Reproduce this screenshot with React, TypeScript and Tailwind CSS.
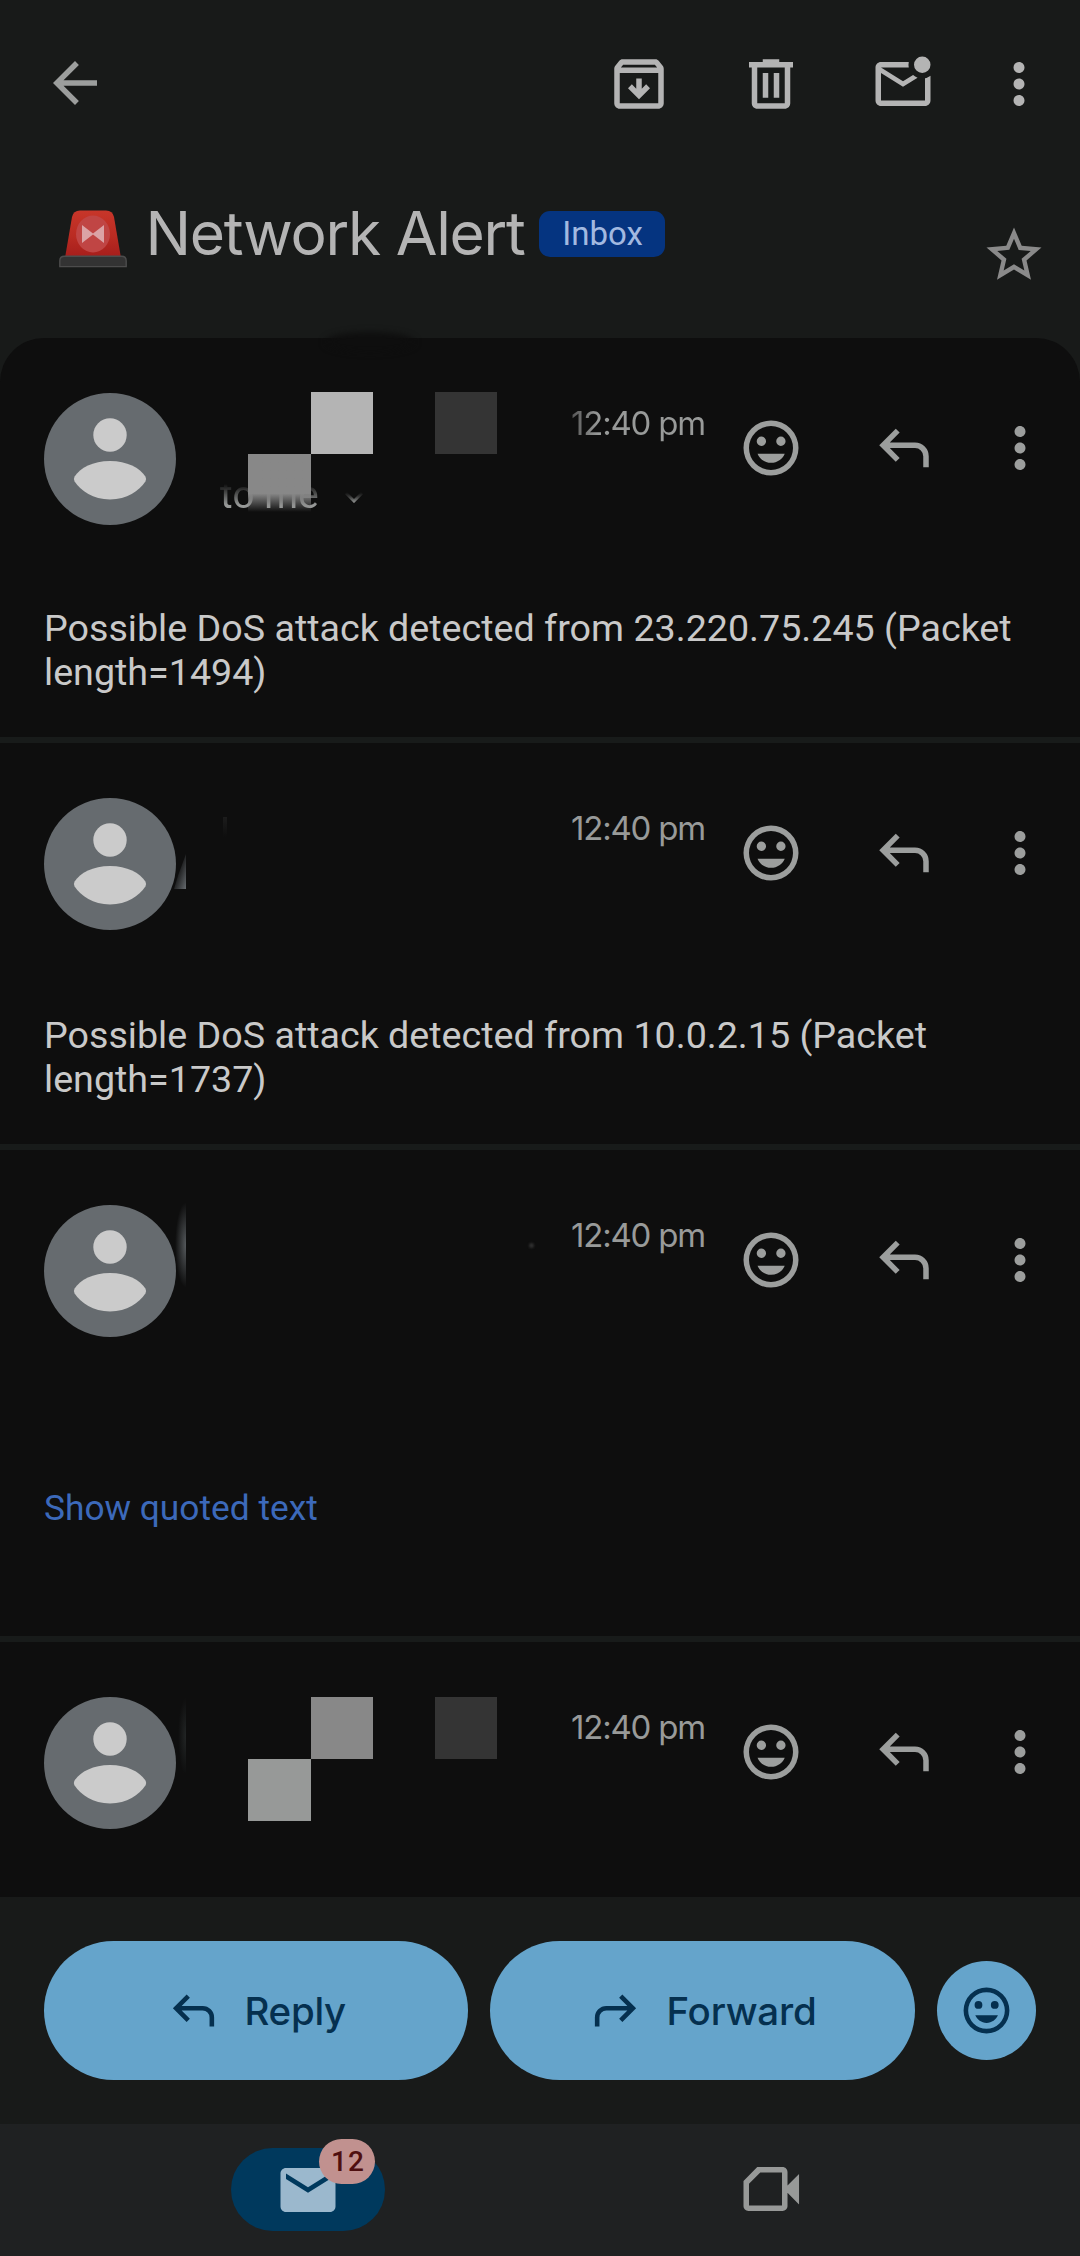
import type { ReactNode } from "react";

type IconProps = { d: string; className: string };

function Icon({ d, className }: IconProps) {
  return (
    <svg viewBox="0 0 24 24" fill="currentColor" className={`block shrink-0 ${className}`}>
      <path fillRule="evenodd" d={d} />
    </svg>
  );
}

const BACK = "M20 11H7.83l5.59-5.59L12 4l-8 8 8 8 1.41-1.41L7.83 13H20v-2z";
const ARCHIVE =
  "M20.54 5.23l-1.39-1.68C18.88 3.21 18.47 3 18 3H6c-.47 0-.88.21-1.16.55L3.46 5.23C3.17 5.57 3 6.02 3 6.5V19c0 1.1.9 2 2 2h14c1.1 0 2-.9 2-2V6.5c0-.48-.17-.93-.46-1.27zM6.24 5h11.52l.83 1H5.42l.82-1zM5 19V8h14v11H5zm11-5.5l-4 4-4-4 1.4-1.4 1.6 1.6V10h2v3.7l1.6-1.6z";
const TRASH =
  "M9 3v1H4v2h1v13c0 1.1.9 2 2 2h10c1.1 0 2-.9 2-2V6h1V4h-5V3H9zM7 6h10v13H7V6zM9 8v9h2V8H9zm4 0v9h2V8h-2z";
const UNREAD =
  "M22 8.98V18c0 1.1-.9 2-2 2H4c-1.1 0-2-.9-2-2V6c0-1.1.9-2 2-2h10.1a5 5 0 0 0 0 2H4l8 5 3.67-2.29c.47.43 1.02.76 1.63.98L12 13 4 8v10h16V9.9c.74-.15 1.42-.48 2-.92zM19 2a3 3 0 1 0 0 6 3 3 0 0 0 0-6z";
const MORE =
  "M12 8c1.1 0 2-.9 2-2s-.9-2-2-2-2 .9-2 2 .9 2 2 2zm0 2c-1.1 0-2 .9-2 2s.9 2 2 2 2-.9 2-2-.9-2-2-2zm0 6c-1.1 0-2 .9-2 2s.9 2 2 2 2-.9 2-2-.9-2-2-2z";
const STAR =
  "M22 9.24l-7.19-.62L12 2 9.19 8.63 2 9.24l5.46 4.73L5.82 21 12 17.27 18.18 21l-1.63-7.03L22 9.24zM12 15.4l-3.76 2.27 1-4.28-3.32-2.88 4.38-.38L12 6.1l1.71 4.04 4.38.38-3.32 2.88 1 4.28L12 15.4z";
const SMILE =
  "M12 2a10 10 0 1 0 0 20 10 10 0 0 0 0-20zm0 18a8 8 0 1 1 0-16 8 8 0 0 1 0 16zM8.5 7.850a1.700 1.700 0 1 0 0 3.400 1.700 1.700 0 0 0 0-3.400zm7.100 0a1.700 1.700 0 1 0 0 3.400 1.700 1.700 0 0 0 0-3.400zM7.100 14.100c.8 1.95 2.700 3.300 4.950 3.300s4.150-1.350 4.950-3.300H7.100z";
const REPLY =
  "M19 19v-4q0-1.25-.875-2.125T16 12H6.825l3.6 3.6L9 17l-6-6 6-6 1.425 1.4-3.6 3.6H16q2.075 0 3.538 1.463T21 15v4h-2z";
const FORWARD =
  "M5 19v-4q0-1.25.875-2.125T8 12h9.175l-3.6 3.6L15 17l6-6-6-6-1.425 1.4 3.6 3.6H8q-2.075 0-3.538 1.463T3 15v4h2z";
const MAIL =
  "M20 4H4c-1.1 0-2 .9-2 2v12c0 1.1.9 2 2 2h16c1.1 0 2-.9 2-2V6c0-1.1-.9-2-2-2zm0 4l-8 5-8-5V6l8 5 8-5v2z";
const MEET =
  "M7 4h9.2c1 0 1.8.8 1.8 1.8v4.9l4.2-4.2v11.1L18 13.4v4.8c0 1-.8 1.8-1.8 1.8H3.8c-1 0-1.8-.8-1.8-1.8V9.1L7 4zm1.1 2L4 10.1V18h12V6H8.100z";

function Siren() {
  return (
    <svg viewBox="0 0 68 58" className="block h-[58px] w-[68px] shrink-0">
      <defs>
        <linearGradient id="lamp" x1="0" y1="0" x2="0" y2="1">
          <stop offset="0" stopColor="#c8362a" />
          <stop offset="0.55" stopColor="#b92b22" />
          <stop offset="1" stopColor="#a51d1b" />
        </linearGradient>
      </defs>
      <path d="M6 48 13 7Q14.300 .4 21 .4H47Q53.700 .4 55 7L62 48Z" fill="url(#lamp)" />
      <ellipse cx="34" cy="24" rx="17" ry="18.500" fill="#c04544" />
      <path d="M23 15 34 23.500 45 15V33L34 24.500 23 33Z" fill="#dba3a6" />
      <path d="M.8 56.600V51Q.8 46.300 5.500 46.300H62.500Q67.200 46.300 67.200 51V56.600Z" fill="#333333" stroke="#4c4c4c" strokeWidth="1.400" />
    </svg>
  );
}

function Avatar() {
  return (
    <svg viewBox="0 0 132 132" className="block size-[132px] shrink-0">
      <circle cx="66" cy="66" r="66" fill="#666b6f" />
      <circle cx="66" cy="42" r="16.700" fill="#cbcbcb" />
      <path d="M66 68C83 68 96 75 101.400 83.500Q102.800 86 101.400 88.500C95 98 83 106.500 66 106.500S37 98 30.600 88.500Q29.200 86 30.600 83.500C36 75 49 68 66 68Z" fill="#cbcbcb" />
    </svg>
  );
}

function Message({
  className,
  overlay,
  fadedTime,
  children,
}: {
  className: string;
  overlay?: ReactNode;
  fadedTime?: boolean;
  children?: ReactNode;
}) {
  return (
    <article className={`shrink-0 pt-[55px] ${className}`}>
      <header className="relative flex h-[132px] items-start justify-between pl-[44px]">
        <Avatar />
        <div className="flex">
          <time
            className={`mt-[10px] w-[137px] whitespace-nowrap font-[Inter,sans-serif] text-[33px] leading-[40px] tracking-[-1.2px] ${
              fadedTime
                ? "bg-linear-to-r from-[#555] via-[#989a99] via-20% to-[#989a99] bg-clip-text text-transparent"
                : "text-[#989a99]"
            }`}
          >
            12:40 pm
          </time>
          <div className="mt-[22px] ml-[30px] flex pr-[27px] text-[#9c9e9d]">
            <Icon d={SMILE} className="size-[66px]" />
            <Icon d={REPLY} className="ml-[67px] size-[66px]" />
            <Icon d={MORE} className="ml-[50px] size-[66px]" />
          </div>
        </div>
        {overlay}
      </header>
      {children}
    </article>
  );
}

function Divider() {
  return <div className="h-[6px] shrink-0 bg-[#181b1a]" />;
}

const bodyText = "pl-[44px] pr-[44px] text-[37.65px] leading-[44px] text-[#c9c9c9]";

export default function App() {
  return (
    <div className="flex h-[2256px] w-[1080px] flex-col overflow-hidden bg-[#181a19] font-[Roboto,sans-serif]">
      <nav className="flex h-[168px] shrink-0 items-center pr-[28px] pl-[42px] text-[#b4b4b4]">
        <Icon d={BACK} className="mb-[3px] size-[66px] text-[#9c9e9d]" />
        <Icon d={ARCHIVE} className="ml-auto size-[66px]" />
        <Icon d={TRASH} className="ml-[66px] size-[66px]" />
        <Icon d={UNREAD} className="ml-[66px] size-[66px]" />
        <Icon d={MORE} className="ml-[50px] size-[66px]" />
      </nav>

      <div className="flex h-[170px] shrink-0 items-start pr-[33px] pl-[59px]">
        <div className="mt-[42px]">
          <Siren />
        </div>
        <h1 className="mt-[29px] ml-[18.500px] whitespace-nowrap font-[Inter,sans-serif] text-[60.500px] leading-[72px] font-normal tracking-[-1.25px] text-[#b4b4b4]">
          Network Alert
        </h1>
        <span className="mt-[43px] ml-[14px] flex h-[46px] w-[126px] items-center justify-center rounded-[11px] bg-[#053480] pl-[2px] text-[33px] leading-[46px] text-[#a2b9e0]">
          Inbox
        </span>
        <Icon d={STAR} className="mt-[54px] ml-auto size-[66px] text-[#8a8a8a]" />
      </div>

      <main className="relative flex h-[1559px] shrink-0 flex-col rounded-t-[44px] bg-[#0e0e0e]">
        <div className="absolute top-[-6px] left-[325px] h-[20px] w-[90px] rounded-[50%] bg-[#0e0e0e] blur-[3px]" />

        <Message
          className="h-[399px]"
          fadedTime
          overlay={
            <>
              <div className="absolute top-[78px] left-[220px] flex items-center gap-[25px] mask-linear-[to_bottom,transparent_13px,black_34px] text-[#979998]">
                <span className="whitespace-nowrap text-[38.500px] leading-[48px] tracking-[0.2px]">to me</span>
                <svg viewBox="0 0 20 12" className="mt-[4px] h-[12px] w-[20px]">
                  <defs>
                    <linearGradient id="chevron" x1="0" y1="0" x2="0" y2="1">
                      <stop offset="0" stopColor="#979998" stopOpacity="0.1" />
                      <stop offset="1" stopColor="#979998" />
                    </linearGradient>
                  </defs>
                  <path d="M2 2 10 10 18 2" fill="none" stroke="url(#chevron)" strokeWidth="3" />
                </svg>
              </div>
              <div className="absolute -top-px left-[248px] grid grid-cols-[63px_62px_62px_62px] grid-rows-[62px_58px]">
                <div className="col-start-2 bg-[#b4b4b4]" />
                <div className="col-start-4 bg-[#343434]" />
                <div className="col-start-1 row-start-2 bg-linear-to-b from-[#888888] from-68% to-transparent" />
              </div>
            </>
          }
        >
          <p className={`mt-[81px] ${bodyText}`}>Possible DoS attack detected from 23.220.75.245 (Packet length=1494)</p>
        </Message>
        <Divider />

        <Message
          className="h-[401px]"
          overlay={
            <>
              <div className="absolute top-[56px] left-[174px] h-[35px] w-[12px] bg-linear-to-br from-transparent from-35% to-[#666b6f] [clip-path:polygon(100%_0,100%_100%,0_100%,35%_60%)]" />
              <div className="absolute top-[19px] left-[223px] h-[20px] w-[4px] bg-linear-to-b from-[#1c1c1c] to-transparent" />
            </>
          }
        >
          <p className={`mt-[83px] ${bodyText}`}>Possible DoS attack detected from 10.0.2.15 (Packet length=1737)</p>
        </Message>
        <Divider />

        <Message
          className="h-[486px]"
          overlay={
            <>
              <div className="absolute top-[-3px] left-[175px] h-[86px] w-[11px] bg-[radial-gradient(ellipse_at_right,#55595c,transparent_70%)]" />
              <div className="absolute top-[38px] left-[529px] size-[5px] rounded-full bg-[#303030] blur-[1px]" />
            </>
          }
        >
          <a className="mt-[149px] ml-[44px] inline-block text-[35.300px] leading-[44px] text-[#3c69ba]">Show quoted text</a>
        </Message>
        <Divider />

        <Message
          className="h-[255px]"
          overlay={
            <>
              <div className="absolute top-0 left-[178px] h-[78px] w-[8px] bg-[radial-gradient(ellipse_at_right,#222525,transparent_70%)]" />
              <div className="absolute top-0 left-[248px] grid grid-cols-[63px_62px_62px_62px] grid-rows-[62px_62px]">
                <div className="col-start-2 bg-[#888888]" />
                <div className="col-start-4 bg-[#343434]" />
                <div className="col-start-1 row-start-2 bg-[#979998]" />
              </div>
            </>
          }
        />
      </main>

      <div className="flex h-[227px] shrink-0 items-center gap-[22px] pr-[44px] pl-[44px] font-[Inter,sans-serif] text-[38.500px] leading-[48px] font-medium text-[#05304f]">
        <button className="flex h-[139px] w-[424px] items-center rounded-full bg-[#65a4cb] pl-[122px]">
          <Icon d={REPLY} className="size-[55px]" />
          <span className="ml-[23.500px] tracking-[-0.3px]">Reply</span>
        </button>
        <button className="flex h-[139px] w-[425px] items-center rounded-full bg-[#65a4cb] pl-[98px]">
          <Icon d={FORWARD} className="size-[55px]" />
          <span className="ml-[23.500px] tracking-[-0.2px]">Forward</span>
        </button>
        <button className="flex size-[99px] items-center justify-center rounded-full bg-[#65a4cb]">
          <Icon d={SMILE} className="size-[55px]" />
        </button>
      </div>

      <footer className="flex flex-1 items-start bg-[#1f2122] pr-[154px] pl-[231px]">
        <div className="relative mt-[24px] flex h-[83px] w-[154px] items-center justify-center rounded-full bg-[#00395d]">
          <Icon d={MAIL} className="size-[66px] text-[#9bb8cd]" />
          <span className="absolute top-[-9px] left-[88px] flex h-[45px] w-[56px] items-center justify-center rounded-full bg-[#c1918f] pl-[2px] text-[28px] leading-[45px] font-medium tracking-[1px] text-[#4f0f10]">
            12
          </span>
        </div>
        <Icon d={MEET} className="mt-[32px] ml-[353px] size-[66px] text-[#979998]" />
      </footer>
    </div>
  );
}
